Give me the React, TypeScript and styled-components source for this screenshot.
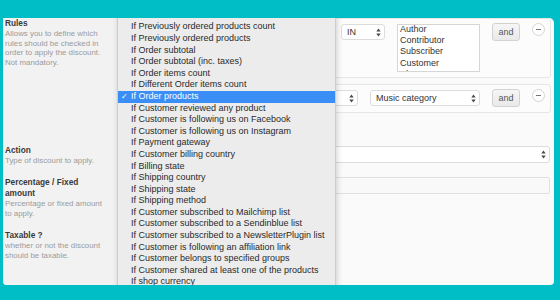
import styled, { createGlobalStyle } from 'styled-components'

const GlobalStyle = createGlobalStyle`
  html, body {
    margin: 0;
    padding: 0;
    background: #00bec5;
  }
  body {
    width: 560px;
    height: 300px;
    overflow: hidden;
    font-family: "Liberation Sans", Arial, sans-serif;
  }
`

const menuItems = [
  'If Previously ordered products count',
  'If Previously ordered products',
  'If Order subtotal',
  'If Order subtotal (inc. taxes)',
  'If Order items count',
  'If Different Order items count',
  'If Order products',
  'If Customer reviewed any product',
  'If Customer is following us on Facebook',
  'If Customer is following us on Instagram',
  'If Payment gateway',
  'If Customer billing country',
  'If Billing state',
  'If Shipping country',
  'If Shipping state',
  'If Shipping method',
  'If Customer subscribed to Mailchimp list',
  'If Customer subscribed to a Sendinblue list',
  'If Customer subscribed to a NewsletterPlugin list',
  'If Customer is following an affiliation link',
  'If Customer belongs to specified groups',
  'If Customer shared at least one of the products',
  'If shop currency',
]

const selected = 'If Order products'

const roles = ['Author', 'Contributor', 'Subscriber', 'Customer', 'Shop Manager']

const Arrows = () => (
  <svg width="5" height="9" viewBox="0 0 5 9">
    <polygon points="0.3,3.6 2.5,0.6 4.7,3.6" fill="#4a4a4a" />
    <polygon points="0.3,5.4 2.5,8.4 4.7,5.4" fill="#4a4a4a" />
  </svg>
)

const App = () => {
  return (
    <>
      <GlobalStyle />
      <Page>
        <Panel>
          <FormRow $h={127}>
            <LabelCell>
              <Title>Rules</Title>
              <Hint>Allows you to define which rules should be checked in order to apply the discount. Not mandatory.</Hint>
            </LabelCell>
            <FieldCell $top={0}>
              <RuleGroup>
                {/* condition select, covered by the open menu */}
                <SelectBox $w={203}>
                  <span />
                  <Arrows />
                </SelectBox>
                <SelectBox $w={44}>
                  <span>IN</span>
                  <Arrows />
                </SelectBox>
                <ListBox>
                  {roles.map((r) => (
                    <li key={r}>{r}</li>
                  ))}
                </ListBox>
                <AndButton>and</AndButton>
                <RemoveButton />
              </RuleGroup>
              <RuleGroup>
                <SelectBox $w={160}>
                  <span />
                  <Arrows />
                </SelectBox>
                <SelectBox $w={60}>
                  <span />
                  <Arrows />
                </SelectBox>
                <SelectBox $w={110}>
                  <span>Music category</span>
                  <Arrows />
                </SelectBox>
                <AndButton>and</AndButton>
                <RemoveButton />
              </RuleGroup>
            </FieldCell>
          </FormRow>

          <FormRow $h={32}>
            <LabelCell>
              <Title>Action</Title>
              <Hint>Type of discount to apply.</Hint>
            </LabelCell>
            <FieldCell $top={1}>
              <SelectBox $grow>
                <span />
                <Arrows />
              </SelectBox>
            </FieldCell>
          </FormRow>

          <FormRow $h={53}>
            <LabelCell>
              <Title>Percentage / Fixed amount</Title>
              <Hint>Percentage or fixed amount to apply.</Hint>
            </LabelCell>
            <FieldCell $top={0}>
              <TextInput defaultValue="" />
            </FieldCell>
          </FormRow>

          <FormRow $h={60}>
            <LabelCell>
              <Title>Taxable ?</Title>
              <Hint>whether or not the discount should be taxable.</Hint>
            </LabelCell>
            <FieldCell $top={2}>
              <CheckBox />
            </FieldCell>
          </FormRow>

          <Menu>
            {menuItems.map((item) => (
              <MenuItem key={item} $active={item === selected}>
                <Check>{item === selected ? '✓' : ''}</Check>
                {item}
              </MenuItem>
            ))}
          </Menu>
        </Panel>
      </Page>
    </>
  )
}

export default App

const Page = styled.div`
  padding: 18px 6px 0 3px;
`

const Panel = styled.div`
  position: relative;
  height: 267px;
  background: #fafafa;
  border-radius: 1px 5px 4px 4px;
  overflow: hidden;
`

const FormRow = styled.div<{ $h: number }>`
  display: grid;
  grid-template-columns: 114px 1fr;
  height: ${(p) => p.$h}px;
`

const LabelCell = styled.div`
  background: #f2f2f2;
  padding: 0 12px 0 2px;
`

const Title = styled.div`
  font-size: 8.3px;
  line-height: 11px;
  font-weight: bold;
  color: #3a3a3a;
`

const Hint = styled.div`
  font-size: 7.9px;
  line-height: 9.7px;
  color: #9b9b9b;
`

const FieldCell = styled.div<{ $top: number }>`
  display: flex;
  flex-direction: column;
  gap: 6px;
  padding: ${(p) => p.$top}px 4px 0 3px;
`

const RuleGroup = styled.div`
  display: flex;
  align-items: flex-start;
  gap: 12px;
  padding: 4px 5px 5px;
  border: 1px solid #e6e6e6;
  border-radius: 3px;
  background: #fcfcfc;
`

const SelectBox = styled.div<{ $w?: number; $grow?: boolean }>`
  box-sizing: border-box;
  display: flex;
  align-items: center;
  justify-content: space-between;
  width: ${(p) => (p.$grow ? 'auto' : `${p.$w}px`)};
  height: ${(p) => (p.$grow ? 17 : 16)}px;
  margin-top: ${(p) => (p.$grow ? 0 : 1)}px;
  padding: 0 3px 0 5px;
  border: 1px solid #dcdcdc;
  border-radius: 3px;
  background: #fff;
  font-size: 9px;
  color: #333;
  white-space: nowrap;
  overflow: hidden;
`

const ListBox = styled.ul`
  box-sizing: border-box;
  width: 83px;
  height: 48px;
  margin: 1px 0 0;
  padding: 0 2px;
  list-style: none;
  border: 1px solid #d6d6d6;
  background: #fff;
  overflow: hidden;
  font-size: 9px;
  line-height: 11.2px;
  color: #333;

  li {
    white-space: nowrap;
  }
  li:first-child {
    margin-top: -1px;
  }
`

const AndButton = styled.div`
  box-sizing: border-box;
  width: 28px;
  height: 18px;
  display: flex;
  align-items: center;
  justify-content: center;
  border: 1px solid #d2d2d2;
  border-radius: 3px;
  background: linear-gradient(#f6f6f6, #e9e9e9);
  font-size: 9px;
  color: #555;
`

const RemoveButton = styled.div`
  position: relative;
  box-sizing: border-box;
  width: 13px;
  height: 13px;
  border: 1px solid #d4d4d4;
  border-radius: 50%;
  background: #fff;

  &::after {
    content: '';
    position: absolute;
    left: 3px;
    top: 5px;
    width: 5px;
    height: 1px;
    background: #777;
  }
`

const TextInput = styled.input`
  box-sizing: border-box;
  height: 17px;
  width: 100%;
  margin: 0;
  border: 1px solid #e0e0e0;
  border-radius: 2px;
  background: #f9f9f9;
  font: 9px "Liberation Sans", Arial, sans-serif;
`

const CheckBox = styled.div`
  width: 10px;
  height: 10px;
  margin-left: 6px;
  border: 1px solid #cfcfcf;
  border-radius: 2px;
  background: #fff;
`

const Menu = styled.div`
  position: absolute;
  left: 114px;
  top: -4px;
  width: 219px;
  box-sizing: border-box;
  padding-top: 7.4px;
  background: #ececec;
  border-left: 1px solid #cdcdcd;
  border-right: 1px solid #cdcdcd;
  box-shadow: 1px 2px 6px rgba(0, 0, 0, 0.18);
`

const MenuItem = styled.div<{ $active: boolean }>`
  display: flex;
  height: 11.6px;
  line-height: 11.6px;
  padding-left: 1px;
  font-size: 9px;
  white-space: nowrap;
  color: ${(p) => (p.$active ? '#fff' : '#2a2a2a')};
  background: ${(p) => (p.$active ? '#3a8ef5' : 'transparent')};
`

const Check = styled.span`
  width: 12px;
  font-size: 8px;
  padding-left: 2px;
  box-sizing: border-box;
`
